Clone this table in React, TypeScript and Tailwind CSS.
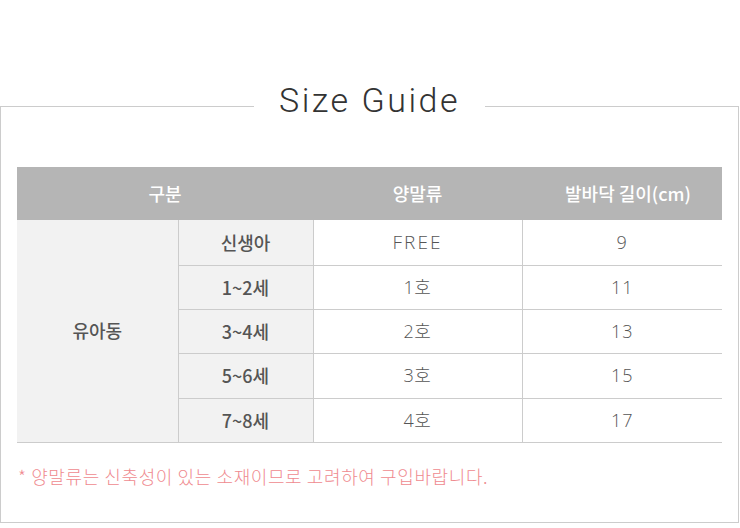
import React from 'react';

const ROWS = [
  { age: '신생아', size: 'FREE', len: '9', h: 'h-[45px]' },
  { age: '1~2세', size: '1호', len: '11', h: 'h-[44px]' },
  { age: '3~4세', size: '2호', len: '13', h: 'h-[44px]' },
  { age: '5~6세', size: '3호', len: '15', h: 'h-[45px]' },
  { age: '7~8세', size: '4호', len: '17', h: 'h-[44px]' },
];

const KR = { fontFamily: '"Noto Sans CJK KR", "Noto Sans", sans-serif' };
const NUM = { fontFamily: '"Open Sans", "Noto Sans CJK KR", sans-serif' };

export default function App() {
  return (
    <div className="w-[740px] h-[528px] bg-white pt-[80px]" style={KR}>
      <div className="flex h-[40px]">
        <div className="flex-1 mt-[26px] border-t border-l border-[#cccccc]" />
        <h1
          className="px-[25px] text-[34px] leading-[40px] font-light tracking-[2.5px] text-[#333333]"
          style={{ fontFamily: 'Roboto, sans-serif' }}
        >
          Size Guide
        </h1>
        <div className="flex-1 mt-[26px] border-t border-r border-[#cccccc] mr-[1px]" />
      </div>

      <div className="border-x border-b border-[#cccccc] mr-[1px] px-4 pt-[47px] h-[403px]">
        <table className="w-full border-collapse text-[18px]">
          <colgroup>
            <col className="w-[161px]" />
            <col className="w-[135px]" />
            <col className="w-[209px]" />
            <col />
          </colgroup>
          <thead>
            <tr className="h-[53px] bg-[#b5b5b5] text-white">
              <th colSpan={2} className="font-medium">구분</th>
              <th className="font-medium">양말류</th>
              <th className="font-medium pl-3">발바닥 길이(cm)</th>
            </tr>
          </thead>
          <tbody>
            {ROWS.map((r, i) => (
              <tr key={r.age} className={`${r.h} border-b border-[#cccccc]`}>
                {i === 0 && (
                  <td rowSpan={5} className="bg-[#f2f2f2] text-center font-medium text-[#555555]">
                    유아동
                  </td>
                )}
                <td className="bg-[#f2f2f2] text-center font-medium text-[#555555] border-x border-[#cccccc]">
                  {r.age}
                </td>
                <td
                  className={`text-center font-light text-[#555555] border-r border-[#cccccc] ${
                    r.size === 'FREE' ? 'text-[19px] tracking-[2px]' : 'tracking-[0.5px]'
                  }`}
                  style={NUM}
                >
                  {r.size}
                </td>
                <td className="text-center font-light tracking-[1px] text-[#555555]" style={NUM}>
                  {r.len}
                </td>
              </tr>
            ))}
          </tbody>
        </table>

        <p className="mt-[20px] pl-[1px] text-[18px] font-light tracking-[0.6px] text-[#ef8a8f]">
          * 양말류는 신축성이 있는 소재이므로 고려하여 구입바랍니다.
        </p>
      </div>
    </div>
  );
}
